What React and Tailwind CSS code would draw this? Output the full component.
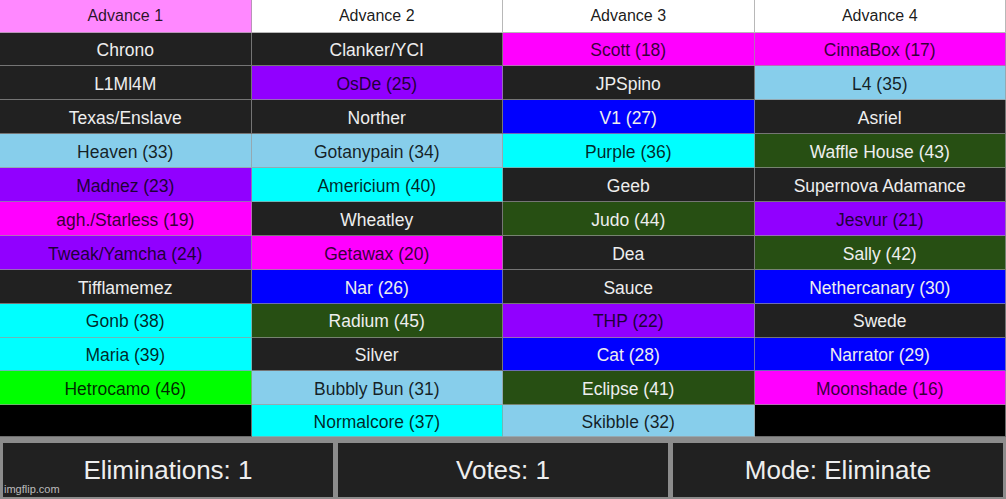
// Elimination board
const styles = {
  pink: "bg-[#ff88ff] text-black/85",
  white: "bg-white text-black/90",
  dark: "bg-[#212121] text-[#eeeeee]",
  magenta: "bg-[#ff00ff] text-black/80",
  purple: "bg-[#9100ff] text-black/80",
  sky: "bg-[#87ceeb] text-black/85",
  blue: "bg-[#0000ff] text-[#eeeeee]",
  cyan: "bg-[#00ffff] text-black/85",
  green: "bg-[#274f13] text-[#eeeeee]",
  lime: "bg-[#00ff00] text-black/85",
  black: "bg-black text-white",
};

const rows = [
  [["Advance 1", "pink"], ["Advance 2", "white"], ["Advance 3", "white"], ["Advance 4", "white"]],
  [["Chrono", "dark"], ["Clanker/YCI", "dark"], ["Scott (18)", "magenta"], ["CinnaBox (17)", "magenta"]],
  [["L1Ml4M", "dark"], ["OsDe (25)", "purple"], ["JPSpino", "dark"], ["L4 (35)", "sky"]],
  [["Texas/Enslave", "dark"], ["Norther", "dark"], ["V1 (27)", "blue"], ["Asriel", "dark"]],
  [["Heaven (33)", "sky"], ["Gotanypain (34)", "sky"], ["Purple (36)", "cyan"], ["Waffle House (43)", "green"]],
  [["Madnez (23)", "purple"], ["Americium (40)", "cyan"], ["Geeb", "dark"], ["Supernova Adamance", "dark"]],
  [["agh./Starless (19)", "magenta"], ["Wheatley", "dark"], ["Judo (44)", "green"], ["Jesvur (21)", "purple"]],
  [["Tweak/Yamcha (24)", "purple"], ["Getawax (20)", "magenta"], ["Dea", "dark"], ["Sally (42)", "green"]],
  [["Tifflamemez", "dark"], ["Nar (26)", "blue"], ["Sauce", "dark"], ["Nethercanary (30)", "blue"]],
  [["Gonb (38)", "cyan"], ["Radium (45)", "green"], ["THP (22)", "purple"], ["Swede", "dark"]],
  [["Maria (39)", "cyan"], ["Silver", "dark"], ["Cat (28)", "blue"], ["Narrator (29)", "blue"]],
  [["Hetrocamo (46)", "lime"], ["Bubbly Bun (31)", "sky"], ["Eclipse (41)", "green"], ["Moonshade (16)", "magenta"]],
  [["", "black"], ["Normalcore (37)", "cyan"], ["Skibble (32)", "sky"], ["", "black"]],
];

const stats = ["Eliminations: 1", "Votes: 1", "Mode: Eliminate"];

const App = () => {
  return (
    <div className="relative w-[1006px] h-[499px] overflow-hidden bg-[#8c8c8c] font-['Liberation_Sans',Arial,sans-serif]">
      {/* Board */}
      <div className="grid grid-cols-4 grid-rows-[32.5px_repeat(11,33.9px)_32px]">
        {rows.flat().map(([label, color], i) => (
          <div
            key={i}
            className={`flex items-center justify-center border-r border-b border-[#9a9a9a]/70 ${i < 4 ? "text-[16px] pt-[1px]" : "text-[17.5px] pt-[3px]"} ${styles[color]}`}
          >
            {label}
          </div>
        ))}
      </div>

      {/* Stats */}
      <div className="flex gap-[5px] px-[3px] pt-[5.5px]">
        {stats.map(s => (
          <div key={s} className="flex-1 h-[54px] flex items-center justify-center pt-[2px] bg-[#212121] text-[#eeeeee] text-[26px]">
            {s}
          </div>
        ))}
      </div>

      {/* Watermark */}
      <div className="absolute left-[4px] bottom-[2px] text-[11px] text-white/70">imgflip.com</div>
    </div>
  );
};

export default App;
